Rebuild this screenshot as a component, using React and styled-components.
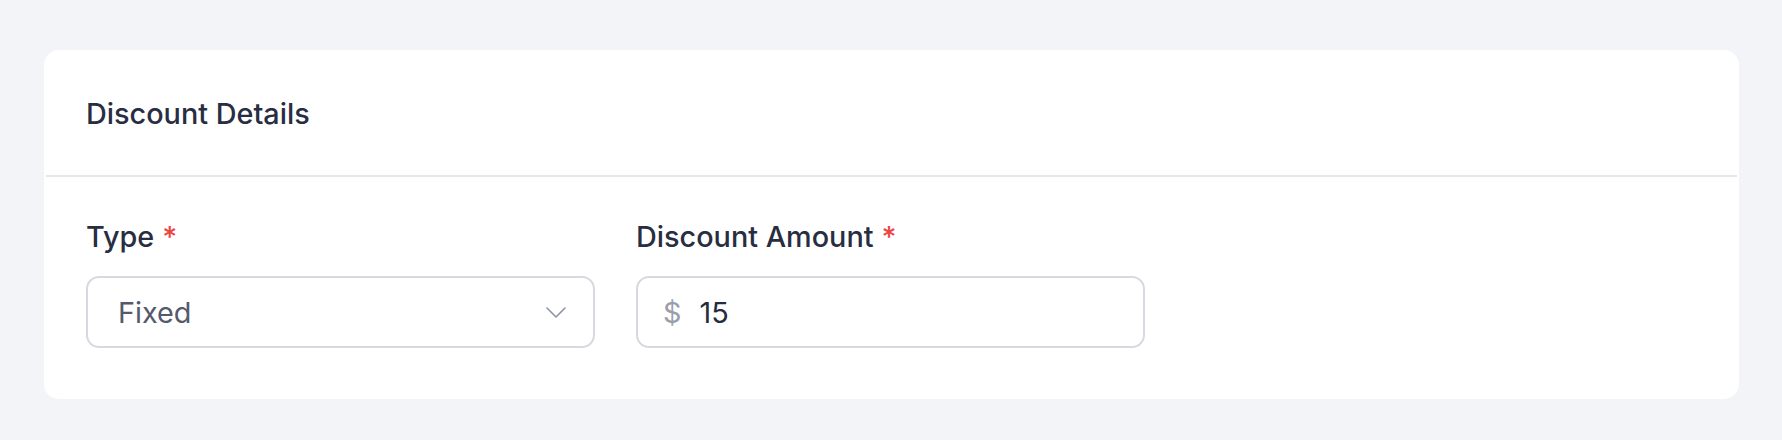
import React from "react";
import styled, { createGlobalStyle } from "styled-components";

const Global = createGlobalStyle`
  html, body { margin: 0; padding: 0; background: #f3f4f8; }
  body { font-family: Inter, "Noto Sans", sans-serif; -webkit-font-smoothing: antialiased; }
  * { box-sizing: border-box; }
`;

const Page = styled.div`
  padding: 50px 43px 42px 44px;
  background: #f3f4f8;
`;

const Card = styled.section`
  background: #ffffff;
  border: 2px solid #ffffff;
  border-radius: 15px;
`;

const Header = styled.header`
  padding: 40px 41px 40px 40px;
  border-bottom: 2px solid #e6e7ec;
`;

const Title = styled.h2`
  margin: 0;
  font-size: 28.8px;
  line-height: 43px;
  font-weight: 500;
  color: #282d42;
`;

const Body = styled.div`
  padding: 42px 42px 49px 40px;
  display: grid;
  grid-template-columns: repeat(3, minmax(0, 1fr));
  column-gap: 41px;
`;

const Field = styled.div`
  display: flex;
  flex-direction: column;
  min-width: 0;
`;

const Label = styled.label`
  font-size: 28.8px;
  line-height: 36px;
  font-weight: 500;
  color: #282d42;
  margin-bottom: 21px;
`;

const Required = styled.span`
  color: #ef4444;
  margin-left: 8px;
`;

const Box = styled.div`
  height: 72px;
  border: 2px solid #d6d9e0;
  border-radius: 13px;
  background: #ffffff;
  display: flex;
  align-items: center;
`;

const SelectBox = styled(Box)`
  padding: 0 27px 0 30px;
  justify-content: space-between;
`;

const SelectValue = styled.span`
  font-size: 28.8px;
  color: #545a6b;
`;

const AmountBox = styled(Box)`
  padding: 0 20px 0 25px;
`;

const Prefix = styled.span`
  font-size: 28.8px;
  color: #9a9eac;
  margin-right: 18px;
`;

const AmountInput = styled.input`
  flex: 1;
  width: 100%;
  min-width: 0;
  border: none;
  outline: none;
  padding: 0;
  background: transparent;
  font-family: Inter, "Noto Sans", sans-serif;
  font-size: 28.8px;
  color: #262b3d;
`;

const Chevron = () => (
  <svg width="20" height="11" viewBox="0 0 20 11" fill="none">
    <path d="M1 1 L10 10 L19 1" stroke="#8f94a4" strokeWidth="1.6" strokeLinecap="round" strokeLinejoin="round" />
  </svg>
);

export default function App() {
  return (
    <>
      <Global />
      <Page>
        <Card>
          <Header>
            <Title>Discount Details</Title>
          </Header>
          <Body>
            <Field>
              <Label>
                Type<Required>*</Required>
              </Label>
              <SelectBox>
                <SelectValue>Fixed</SelectValue>
                <Chevron />
              </SelectBox>
            </Field>
            <Field>
              <Label>
                Discount Amount<Required>*</Required>
              </Label>
              <AmountBox>
                <Prefix>$</Prefix>
                <AmountInput defaultValue="15" />
              </AmountBox>
            </Field>
          </Body>
        </Card>
      </Page>
    </>
  );
}
